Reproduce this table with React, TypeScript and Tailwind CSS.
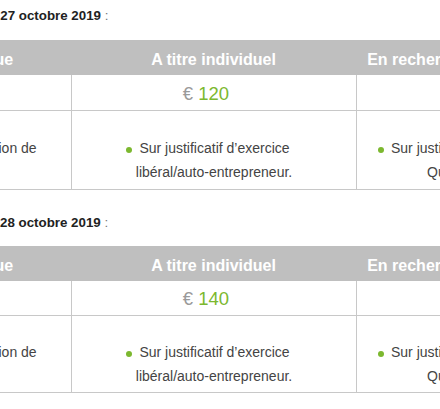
const heads = ["Formation continue", "A titre individuel", "En recherche d’emploi"];

const conditions = [
  ["Sur justificatif de l’inscription de", "l’employeur."],
  ["Sur justificatif d’exercice", "libéral/auto-entrepreneur."],
  ["Sur justificatif récent", "Quotient"],
];

const sections = [
  { prefix: "Jusqu’au", date: "27 octobre 2019", pad: "pl-[132px]", gap: "mt-0", prices: ["100", "120", "0"], tall: true },
  { prefix: "Depuis le", date: "28 octobre 2019", pad: "pl-[131px]", gap: "mt-[23px]", prices: ["110", "140", "0"], tall: false },
];

const cols = "grid grid-cols-[265px_285px_194px]";

function PriceTable({ prices, tall }: { prices: string[]; tall: boolean }) {
  return (
    <div>
      <div className={`${cols} bg-[#bfbfbf] text-[16px] font-bold text-white`}>
        {heads.map((h) => (
          <div key={h} className="pt-[4px] text-center leading-[31px]">
            {h}
          </div>
        ))}
      </div>

      <div className={`${cols} border-b border-[#c8c8c8]`}>
        {prices.map((p, i) => (
          <div
            key={i}
            className={`text-center text-[18.5px] ${i > 0 ? "border-l border-[#c8c8c8]" : ""} ${
              i === 2 ? "pl-[24px]" : "pr-[16px]"
            } ${tall ? "h-[35px] pt-[2px] leading-[33px]" : "h-[34px] pt-[2px] leading-[32px]"}`}
          >
            <span className="text-[#9a9a9a]">€</span> <span className="text-[#7cb82f]">{p}</span>
          </div>
        ))}
      </div>

      <div className={`${cols} border-b border-[#c8c8c8] text-[14px] leading-[24px] text-[#444]`}>
        {conditions.map(([a, b], i) => (
          <div
            key={i}
            className={`text-center ${i > 0 ? "border-l border-[#c8c8c8]" : ""} ${
              tall ? "pt-[25px] pb-[5px]" : "pt-[24px] pb-[4px]"
            }`}
          >
            <div className="pr-[12px]">
              <span className="mr-[7px] inline-block h-[6px] w-[6px] rounded-full bg-[#7cb82f]" />
              {a}
            </div>
            <div>{b}</div>
          </div>
        ))}
      </div>
    </div>
  );
}

export default function App() {
  return (
    <div className="h-[409px] w-[440px] overflow-hidden bg-white font-['Liberation_Sans',Arial,sans-serif]">
      <div className="-ml-[194px] w-[760px] pt-[6px]">
        {sections.map((s) => (
          <section key={s.date} className={s.gap}>
            <p className={`${s.pad} text-[13.33px] leading-[20px] text-[#222]`}>
              <b>
                {s.prefix} {s.date}
              </b>{" "}
              <span className="text-[#777]">:</span>
            </p>
            <div className={s.tall ? "mt-[14px]" : "mt-[13px]"}>
              <PriceTable prices={s.prices} tall={s.tall} />
            </div>
          </section>
        ))}
      </div>
    </div>
  );
}
